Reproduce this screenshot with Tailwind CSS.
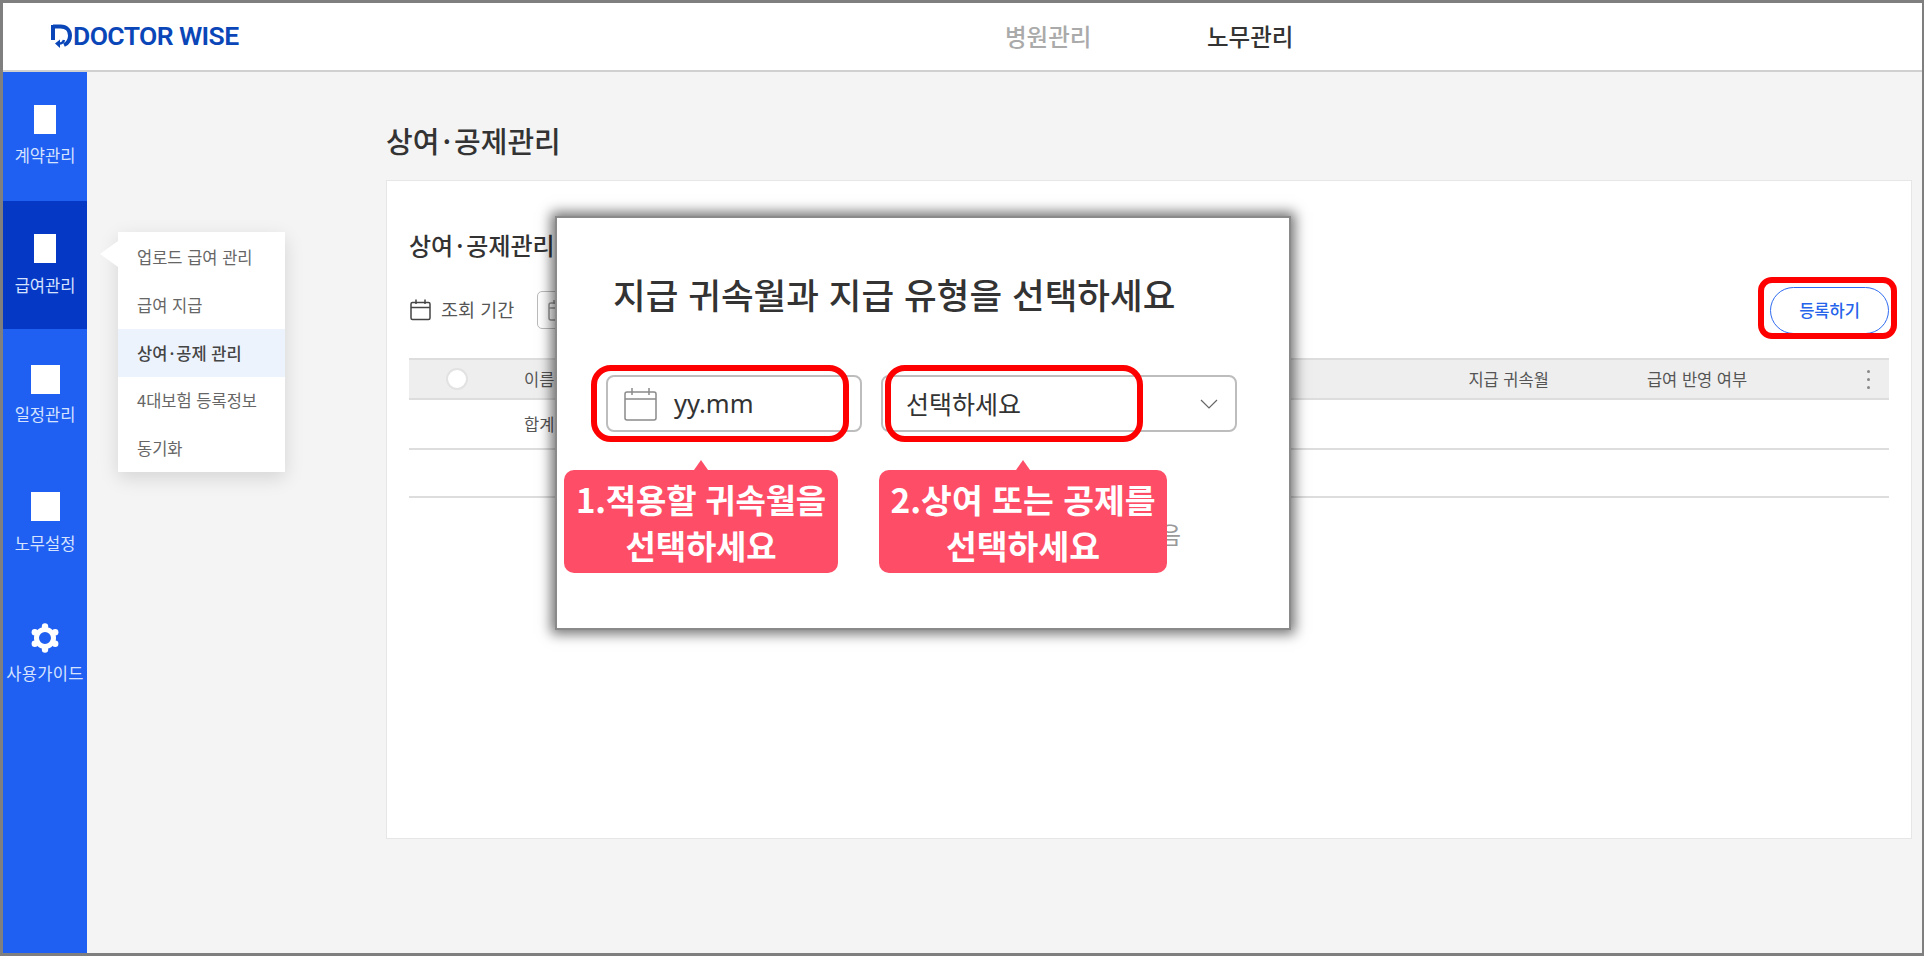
<!DOCTYPE html>
<html lang="ko">
<head>
<meta charset="UTF-8">
<title>상여·공제관리</title>
<script src="https://cdn.jsdelivr.net/npm/@tailwindcss/browser@4"></script>
</head>
<body class="bg-white">
<div class="relative w-[1924px] h-[956px] overflow-hidden font-['Noto_Sans_CJK_KR','Noto_Sans',sans-serif]">
  <div class="flex h-full flex-col border-[3px] border-r-2 border-[#7f7f7f]">
    <!-- header -->
    <header class="flex h-[69px] shrink-0 border-b-2 border-[#d0d0d0] bg-white">
      <div class="flex w-[1002px] items-center pl-[48px]">
        <svg width="21" height="25" viewBox="0 0 21 25" fill="none">
          <path d="M2 2.500H9.500C15.500 2.500 19 6.500 19 11.500C19 16 16.500 19.500 13 21" stroke="#0a46b8" stroke-width="4"/>
          <path d="M2 1V16" stroke="#0a46b8" stroke-width="4"/>
          <path d="M13 16C12.500 18 10.500 19.500 8 19.500" stroke="#0a46b8" stroke-width="2.500"/>
          <path d="M9 15.500L4 19.500L9 24Z" fill="#0a46b8"/>
        </svg>
        <span class="ml-[1px] font-['Roboto',sans-serif] text-[26.500px] leading-none font-semibold tracking-[-0.6px] text-[#0a46b8]">DOCTOR WISE</span>
      </div>
      <nav class="flex items-center text-[23.500px] font-medium">
        <span class="w-[202px] text-[#aaaaaa]">병원관리</span>
        <span class="text-[#333333]">노무관리</span>
      </nav>
    </header>
    <div class="flex min-h-0 flex-1">
      <!-- sidebar -->
      <aside class="flex w-[84px] shrink-0 flex-col bg-[#1f5ff2] text-[16.500px] text-[#d5e3ff]">
        <div class="flex h-[129px] flex-col items-center pt-[33px]">
          <div class="h-[29px] w-[22px] bg-white"></div>
          <span class="mt-[8px] leading-[26px]">계약관리</span>
        </div>
        <div class="flex h-[128px] flex-col items-center bg-[#0638c6] pt-[33px]">
          <div class="h-[29px] w-[22px] bg-white"></div>
          <span class="mt-[9px] leading-[26px]">급여관리</span>
        </div>
        <div class="flex h-[128px] flex-col items-center pt-[36px]">
          <div class="h-[29px] w-[29px] bg-white"></div>
          <span class="mt-[7px] leading-[26px]">일정관리</span>
        </div>
        <div class="flex h-[130px] flex-col items-center pt-[35px]">
          <div class="h-[29px] w-[29px] bg-white"></div>
          <span class="mt-[9px] leading-[26px]">노무설정</span>
        </div>
        <div class="flex flex-col items-center pt-[36px]">
          <svg width="28" height="30" viewBox="0 0 28 30">
            <circle cx="14" cy="3.500" r="3.200" fill="white"/>
            <circle cx="14" cy="26.500" r="3.200" fill="white"/>
            <circle cx="3.800" cy="9.200" r="3.200" fill="white"/>
            <circle cx="24.200" cy="9.200" r="3.200" fill="white"/>
            <circle cx="3.800" cy="20.800" r="3.200" fill="white"/>
            <circle cx="24.200" cy="20.800" r="3.200" fill="white"/>
            <circle cx="14" cy="15" r="8.500" fill="none" stroke="white" stroke-width="5"/>
          </svg>
          <span class="mt-[7px] leading-[26px] whitespace-nowrap tracking-[0.3px]">사용가이드</span>
        </div>
      </aside>
      <!-- main -->
      <main class="min-w-0 flex-1 bg-[#f4f4f4] pl-[299px] pr-[10px]">
        <h1 class="mt-[49px] text-[29px] leading-[38px] font-medium text-[#333333]">상여<span class="mx-[3px]">·</span>공제관리</h1>
        <section class="mt-[21px] h-[659px] border border-[#e6e6e6] bg-white pt-[46px]">
          <div class="pl-[22px] pr-[22px]">
            <h2 class="text-[24px] leading-[36px] font-medium text-[#333333]">상여<span class="mx-[3px]">·</span>공제관리</h2>
            <div class="mt-[16px] flex h-[62px] items-center text-[18.500px] text-[#555555]">
              <svg width="24" height="24" viewBox="0 0 24 24" fill="none" stroke="#444444" stroke-width="1.500"><rect x="2" y="4.500" width="19" height="17" rx="1.500"/><path d="M2 9.500H21M7 1.500V6M16 1.500V6"/></svg>
              <span class="ml-[8px]">조회 기간</span>
              <div class="ml-[23px] flex h-[38px] w-[120px] items-center rounded-[5px] border border-[#bbbbbb] pl-[10px]">
                <svg width="22" height="22" viewBox="0 0 22 22" fill="none" stroke="#999999" stroke-width="1.500"><rect x="1" y="4" width="19" height="17" rx="2"/><path d="M1 9H20M6 1V5M15 1V5"/></svg>
              </div>
              <div class="ml-auto flex h-[47px] w-[119px] items-center justify-center rounded-full border border-[#2f6bf0] text-[16.500px] font-medium text-[#2563eb]">등록하기</div>
            </div>
            <!-- table -->
            <div class="mt-[17px] flex h-[42px] items-center border-y-2 border-[#dddddd] bg-[#eeeeee] text-[16.500px] text-[#555555]">
              <div class="ml-[37px] h-[22px] w-[22px] rounded-full border-2 border-[#e2e2e2] bg-white"></div>
              <span class="ml-[56px]">이름</span>
              <span class="ml-[914px]">지급 귀속월</span>
              <span class="ml-[98px]">급여 반영 여부</span>
              <div class="ml-auto mr-[19px] flex flex-col gap-[5px]">
                <span class="h-[3px] w-[3px] rounded-full bg-[#888888]"></span>
                <span class="h-[3px] w-[3px] rounded-full bg-[#888888]"></span>
                <span class="h-[3px] w-[3px] rounded-full bg-[#888888]"></span>
              </div>
            </div>
            <div class="flex h-[50px] items-center border-b-2 border-[#dddddd] pl-[115px] text-[16.500px] text-[#555555]">합계</div>
            <div class="h-[48px] border-b-2 border-[#dddddd]"></div>
          </div>
        </section>
      </main>
    </div>
  </div>

  <!-- hover submenu -->
  <div class="absolute left-[118px] top-[232px] w-[167px] bg-white py-[1px] text-[16.500px] text-[#666666] shadow-[0_6px_18px_rgba(0,0,0,0.13)]">
    <span class="absolute left-[-18px] top-[9px] h-0 w-0 border-y-[13px] border-r-[18px] border-y-transparent border-r-white"></span>
    <div class="flex h-[48px] items-center pl-[19px]">업로드 급여 관리</div>
    <div class="flex h-[48px] items-center pl-[19px]">급여 지급</div>
    <div class="flex h-[48px] items-center bg-[#edf3fd] pl-[19px] font-medium text-[#444444]">상여<span class="mx-[2px]">·</span>공제 관리</div>
    <div class="flex h-[47px] items-center pl-[19px]">4대보험 등록정보</div>
    <div class="flex h-[47px] items-center pl-[19px] pt-[2px]">동기화</div>
  </div>

  <!-- modal -->
  <div class="absolute left-[555px] top-[216px] h-[414px] w-[736px] border-2 border-[#8a8a8a] bg-white pl-[49px] pt-[52px] shadow-[0_0_12px_4px_rgba(0,0,0,0.55)]">
    <h3 class="pl-[7px] text-[35.500px] leading-[48px] font-medium whitespace-nowrap text-[#333333]">지급 귀속월과 지급 유형을 선택하세요</h3>
    <div class="mt-[57px] flex gap-[19px]">
      <div class="flex h-[57px] w-[256px] items-center rounded-[8px] border-2 border-[#bdbdbd] pl-[16px]">
        <svg width="34" height="34" viewBox="0 0 34 34" fill="none" stroke="#8a8a8a" stroke-width="1.500"><rect x="1" y="5" width="31" height="28" rx="2"/><path d="M1 12H32M8 1V8M25 1V8"/></svg>
        <span class="ml-[16px] font-['Noto_Sans',sans-serif] text-[25.500px] text-[#333333]">yy.mm</span>
      </div>
      <div class="flex h-[57px] w-[356px] items-center justify-between rounded-[8px] border-2 border-[#bdbdbd] pl-[23px] pr-[16px]">
        <span class="text-[25px] text-[#333333]">선택하세요</span>
        <svg width="20" height="12" viewBox="0 0 20 12" fill="none" stroke="#666666" stroke-width="1.200"><path d="M2 2L10 10L18 2"/></svg>
      </div>
    </div>
  </div>

  <!-- text of the empty table, showing past the callout -->
  <div class="absolute right-[743px] top-[516px] text-[24px] leading-[36px] text-[#999999]">없음</div>

  <!-- guide callouts -->
  <div class="absolute left-[591px] top-[365px] h-[77px] w-[258px] rounded-[20px] border-[6px] border-[#ff0000]"></div>
  <div class="absolute left-[885px] top-[365px] h-[77px] w-[258px] rounded-[20px] border-[6px] border-[#ff0000]"></div>
  <div class="absolute left-[1758px] top-[277px] h-[62px] w-[139px] rounded-[14px] border-[6px] border-[#ff0000]"></div>

  <div class="absolute left-[564px] top-[470px] flex h-[103px] w-[274px] items-center justify-center rounded-[10px] bg-[#fe4e67] text-center text-[33px] leading-[46px] font-bold tracking-[-0.2px] text-white">
    <span class="absolute left-[130px] top-[-10px] h-0 w-0 border-x-[7px] border-b-[10px] border-x-transparent border-b-[#fe4e67]"></span>
    <span>1.적용할 귀속월을<br>선택하세요</span>
  </div>
  <div class="absolute left-[879px] top-[470px] flex h-[103px] w-[288px] items-center justify-center rounded-[10px] bg-[#fe4e67] text-center text-[33.500px] leading-[46px] font-bold text-white">
    <span class="absolute left-[137px] top-[-10px] h-0 w-0 border-x-[7px] border-b-[10px] border-x-transparent border-b-[#fe4e67]"></span>
    <span>2.상여 또는 공제를<br>선택하세요</span>
  </div>
</div>
</body>
</html>
